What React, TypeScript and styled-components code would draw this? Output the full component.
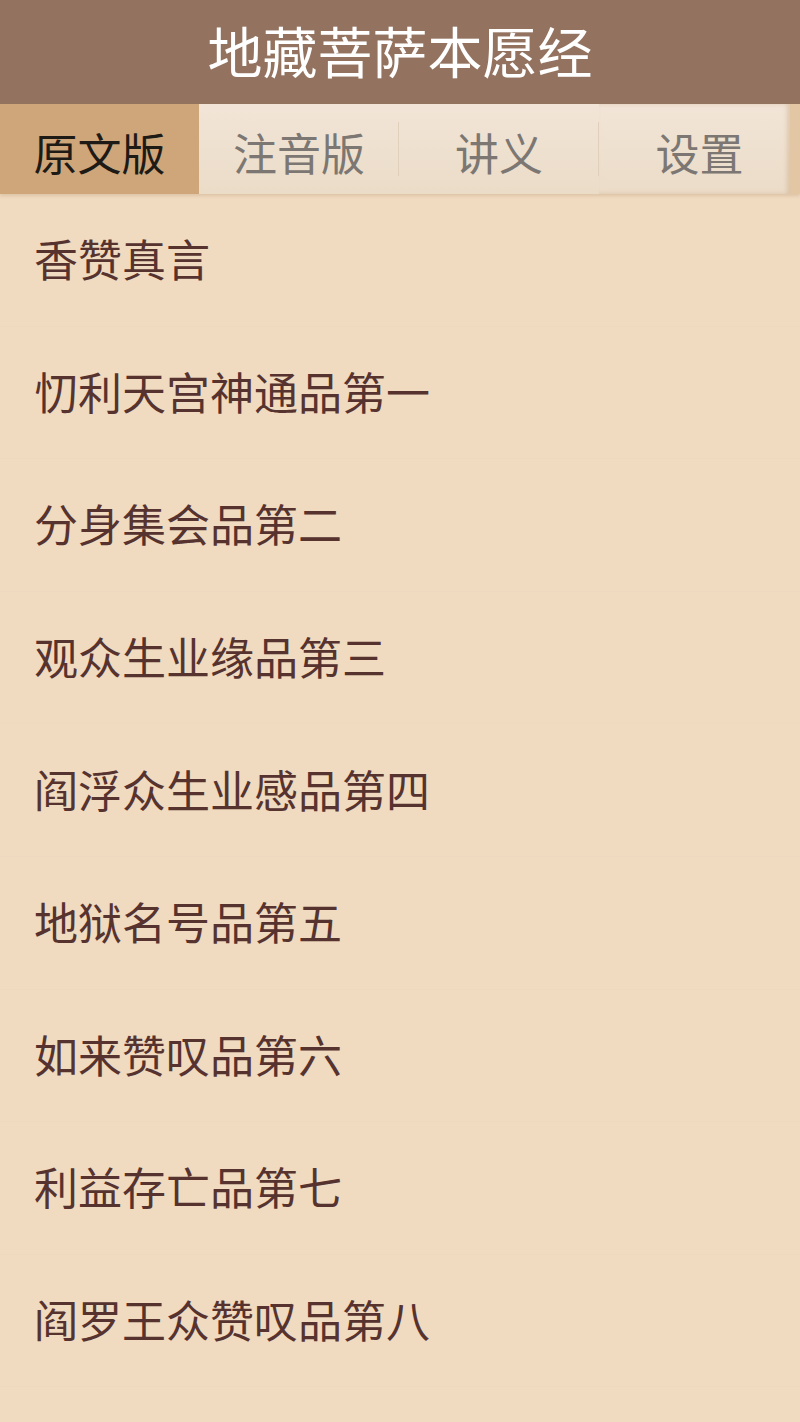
import React from "react";
import styled, { createGlobalStyle } from "styled-components";

const Global = createGlobalStyle`
  html, body { margin: 0; padding: 0; background: #f0dac0; }
  body { font-family: "Noto Sans CJK SC", "Noto Sans", sans-serif; }
  * { box-sizing: border-box; }
`;

const Page = styled.div`
  width: 800px;
  height: 1422px;
  background: #f0dac0;
  display: flex;
  flex-direction: column;
  overflow: hidden;
`;

const Header = styled.header`
  height: 104px;
  flex: none;
  background: #93735f;
  display: flex;
  align-items: center;
  justify-content: center;
  color: #ffffff;
  font-size: 55px;
  line-height: 1;
  padding-bottom: 6px;
`;

const TabBar = styled.nav`
  height: 90px;
  flex: none;
  display: flex;
  background: linear-gradient(#f1e3d3, #ecdac4);
  box-shadow: 0 2px 3px rgba(150, 110, 70, 0.2);
  position: relative;
  z-index: 1;
`;

const Tab = styled.div<{ $active?: boolean; $edge?: boolean }>`
  width: ${(p) => (p.$active ? "199px" : "200px")};
  flex: ${(p) => (p.$edge ? "1" : "none")};
  display: flex;
  align-items: center;
  justify-content: center;
  font-size: 44px;
  line-height: 1;
  padding-top: 6px;
  padding-left: ${(p) => (p.$edge ? "10px" : "0")};
  color: ${(p) => (p.$active ? "#1e1a16" : "#7c7773")};
  background: ${(p) =>
    p.$active ? "#cfa67a" : "linear-gradient(#f2e5d7, #ebdcc8)"};
  border-right: ${(p) => (p.$edge ? "10px solid #e3c7a5" : "none")};
  box-shadow: ${(p) =>
    p.$edge ? "inset -3px 0 4px rgba(190,150,110,0.35)" : "none"};
  background-clip: padding-box;
  position: relative;
`;

const SepLine = styled.span`
  position: absolute;
  left: -1px;
  top: 18px;
  bottom: 18px;
  width: 1px;
  background: #e0cfba;
`;

const List = styled.ul`
  list-style: none;
  margin: 0;
  padding: 0;
  display: flex;
  flex-direction: column;
`;

const Row = styled.li`
  height: 132.6px;
  flex: none;
  display: flex;
  align-items: center;
  padding-left: 34px;
  font-size: 44px;
  line-height: 1;
  color: #56332f;
  border-bottom: 1px solid rgba(236, 214, 190, 0.5);
`;

const RowText = styled.span`
  margin-top: -3px;
`;

const chapters = [
  "香赞真言",
  "忉利天宫神通品第一",
  "分身集会品第二",
  "观众生业缘品第三",
  "阎浮众生业感品第四",
  "地狱名号品第五",
  "如来赞叹品第六",
  "利益存亡品第七",
  "阎罗王众赞叹品第八",
];

export default function App() {
  return (
    <Page>
      <Global />
      <Header>地藏菩萨本愿经</Header>
      <TabBar>
        <Tab $active>原文版</Tab>
        <Tab>注音版</Tab>
        <Tab>
          <SepLine />
          讲义
        </Tab>
        <Tab $edge>
          <SepLine />
          设置
        </Tab>
      </TabBar>
      <List>
        {chapters.map((c) => (
          <Row key={c}>
            <RowText>{c}</RowText>
          </Row>
        ))}
      </List>
    </Page>
  );
}
